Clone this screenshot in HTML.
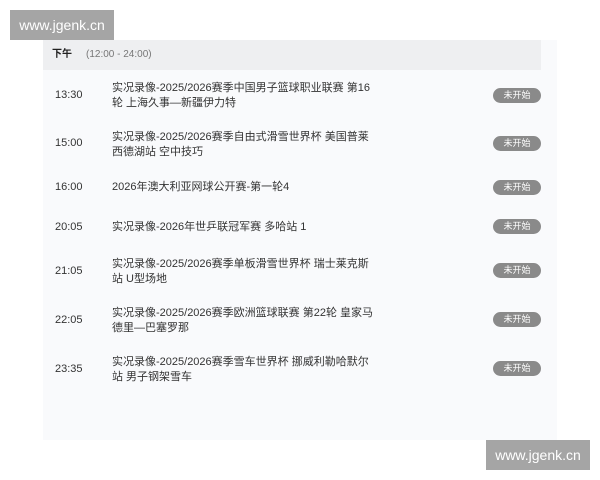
<!DOCTYPE html>
<html><head><meta charset="utf-8"><style>
body{margin:0;width:600px;height:480px;background:#fff;position:relative;font-family:"Liberation Sans","Noto Sans CJK SC",sans-serif;overflow:hidden}
.wm{position:absolute;background:#a5a5a5;color:#fff;font-size:14px;width:104px;height:30px;line-height:30px;text-align:center}
.card{position:absolute;left:43px;top:40px;width:514px;height:400px;background:#f9fafc}
.hd{position:absolute;left:0;top:0;width:498px;height:30px;background:#eeeff1;font-size:10px;line-height:30px}
.hd b{position:absolute;left:9px;font-weight:bold;color:#222}
.hd span{position:absolute;left:43px;color:#777}
.t{position:absolute;left:12px;font-size:11px;color:#333}
.d{position:absolute;left:69px;width:300px;white-space:nowrap;font-size:11px;line-height:15px;color:#333}
.b{position:absolute;left:450px;width:48px;height:15px;border-radius:8px;background:#8a8a8a;color:#fff;font-size:9px;line-height:15px;text-align:center}
</style></head><body>
<div class="wm" style="left:10px;top:10px">www.jgenk.cn</div>
<div class="card">
<div class="hd"><b>下午</b><span>(12:00 - 24:00)</span></div>
<div class="t" style="top:49px">13:30</div><div class="d" style="top:41px">实况录像-2025/2026赛季中国男子篮球职业联赛 第16<br>轮 上海久事—新疆伊力特</div><div class="b" style="top:48px">未开始</div>
<div class="t" style="top:97px">15:00</div><div class="d" style="top:90px">实况录像-2025/2026赛季自由式滑雪世界杯 美国普莱<br>西德湖站 空中技巧</div><div class="b" style="top:96px">未开始</div>
<div class="t" style="top:141px">16:00</div><div class="d" style="top:140px">2026年澳大利亚网球公开赛-第一轮4</div><div class="b" style="top:140px">未开始</div>
<div class="t" style="top:181px">20:05</div><div class="d" style="top:180px">实况录像-2026年世乒联冠军赛 多哈站 1</div><div class="b" style="top:179px">未开始</div>
<div class="t" style="top:225px">21:05</div><div class="d" style="top:217px">实况录像-2025/2026赛季单板滑雪世界杯 瑞士莱克斯<br>站 U型场地</div><div class="b" style="top:223px">未开始</div>
<div class="t" style="top:274px">22:05</div><div class="d" style="top:266px">实况录像-2025/2026赛季欧洲篮球联赛 第22轮 皇家马<br>德里—巴塞罗那</div><div class="b" style="top:272px">未开始</div>
<div class="t" style="top:323px">23:35</div><div class="d" style="top:315px">实况录像-2025/2026赛季雪车世界杯 挪威利勒哈默尔<br>站 男子钢架雪车</div><div class="b" style="top:321px">未开始</div>
</div>
<div class="wm" style="left:486px;top:440px">www.jgenk.cn</div>
</body></html>
